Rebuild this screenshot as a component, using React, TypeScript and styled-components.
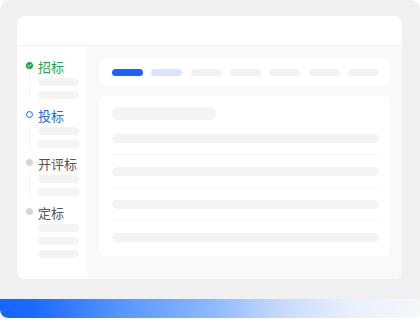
import styled, { createGlobalStyle } from 'styled-components'

const GlobalStyle = createGlobalStyle`
  html, body {
    margin: 0;
    padding: 0;
    background: #ffffff;
  }
  body {
    font-family: 'Noto Sans CJK SC', 'Noto Sans', sans-serif;
  }
`

type StepState = 'done' | 'active' | 'todo'

const steps: { label: string; state: StepState; bars: number }[] = [
  { label: '招标', state: 'done', bars: 2 },
  { label: '投标', state: 'active', bars: 2 },
  { label: '开评标', state: 'todo', bars: 2 },
  { label: '定标', state: 'todo', bars: 3 }
]

const stepColor: Record<StepState, string> = {
  done: '#1ea64c',
  active: '#1a66ff',
  todo: '#555555'
}

const Frame = styled.div`
  width: 420px;
  height: 318px;
  border-radius: 10px 10px 8px 8px;
  background: #f0f0f0;
  overflow: hidden;
  display: flex;
  flex-direction: column;
`

const Stage = styled.div`
  flex: 1;
  padding: 16px 18px 20px 17px;
  display: flex;
`

const Footer = styled.div`
  height: 19px;
  border-radius: 0 0 8px 8px;
  background: linear-gradient(90deg, #1566ff 0%, #1a6bff 8%, #5b97ff 30%, #8cb8ff 50%, #c9dcff 68%, #e9f0fd 84%, #f6f7f9 100%);
`

const Card = styled.div`
  flex: 1;
  background: #ffffff;
  border-radius: 8px;
  overflow: hidden;
  display: flex;
  flex-direction: column;
`

const Header = styled.div`
  height: 29px;
  border-bottom: 1px solid #f1f1f1;
`

const Body = styled.div`
  flex: 1;
  display: flex;
`

const Sidebar = styled.div`
  width: 70px;
  padding: 13px 0 0 8px;
  box-sizing: border-box;
  background: #ffffff;
`

const Step = styled.div<{ $last?: boolean }>`
  display: flex;
  gap: 5px;
  padding-bottom: ${(p) => (p.$last ? '0' : '8.5px')};
`

const Rail = styled.div`
  width: 8px;
  display: flex;
  flex-direction: column;
  align-items: center;
`

const Dot = styled.div<{ $state: StepState }>`
  width: 7px;
  height: 7px;
  margin-top: 3px;
  border-radius: 50%;
  box-sizing: border-box;
  display: flex;
  align-items: center;
  justify-content: center;
  background: ${(p) => (p.$state === 'done' ? '#1ea64c' : p.$state === 'active' ? '#ffffff' : '#d6d6d6')};
  border: ${(p) => (p.$state === 'active' ? '1.5px solid #1a66ff' : 'none')};
`

const Connector = styled.div`
  flex: 1;
  width: 1px;
  margin-top: 4px;
  margin-bottom: -2px;
  background: repeating-linear-gradient(180deg, #e2e2e2 0 1px, transparent 1px 3px);
`

const StepMain = styled.div`
  display: flex;
  flex-direction: column;
`

const StepLabel = styled.div<{ $state: StepState }>`
  height: 16px;
  line-height: 16px;
  font-size: 13px;
  color: ${(p) => stepColor[p.$state]};
  margin-bottom: 3px;
  white-space: nowrap;
`

const SideBar = styled.div`
  width: 41px;
  height: 8px;
  border-radius: 4px;
  background: #f4f4f4;
  & + & {
    margin-top: 5px;
  }
`

const Content = styled.div`
  flex: 1;
  background: #f9f9f9;
  padding: 13px 12px 0 12px;
  display: flex;
  flex-direction: column;
`

const TabCard = styled.div`
  height: 26px;
  background: #ffffff;
  border-radius: 6px;
  padding: 0 11px 0 13px;
  display: flex;
  align-items: center;
  justify-content: space-between;
`

const Pill = styled.div<{ $tone: 'primary' | 'soft' | 'plain' }>`
  width: 31px;
  height: 7px;
  border-radius: 4px;
  background: ${(p) => (p.$tone === 'primary' ? '#1763ff' : p.$tone === 'soft' ? '#d9e5ff' : '#f2f2f2')};
`

const MainCard = styled.div`
  margin-top: 11px;
  height: 160px;
  background: #ffffff;
  border-radius: 7px;
  padding: 11px 11px 0 13px;
  box-sizing: border-box;
  display: flex;
  flex-direction: column;
`

const TitleBar = styled.div`
  width: 104px;
  height: 13px;
  border-radius: 7px;
  background: #f4f4f4;
  margin-bottom: 14px;
`

const Row = styled.div`
  height: 9px;
  border-radius: 5px;
  background: #f4f4f4;
`

const Divider = styled.div`
  height: 1px;
  margin: 11px 1px 12px 0;
  background: #f3f3f3;
`

const Check = () => (
  <svg width='5' height='5' viewBox='0 0 10 10'>
    <path d='M2 5.2 L4.2 7.3 L8 3' fill='none' stroke='#ffffff' strokeWidth='1.8' strokeLinecap='round' strokeLinejoin='round' />
  </svg>
)

const App = () => {
  const tones: ('primary' | 'soft' | 'plain')[] = ['primary', 'soft', 'plain', 'plain', 'plain', 'plain', 'plain']

  return (
    <>
      <GlobalStyle />
      <Frame>
        <Stage>
          <Card>
            <Header />
            <Body>
              <Sidebar>
                {steps.map((step, i) => {
                  const last = i === steps.length - 1
                  return (
                    <Step key={step.label} $last={last}>
                      <Rail>
                        <Dot $state={step.state}>{step.state === 'done' && <Check />}</Dot>
                        {!last && <Connector />}
                      </Rail>
                      <StepMain>
                        <StepLabel $state={step.state}>{step.label}</StepLabel>
                        {Array.from({ length: step.bars }).map((_, j) => (
                          <SideBar key={j} />
                        ))}
                      </StepMain>
                    </Step>
                  )
                })}
              </Sidebar>
              <Content>
                <TabCard>
                  {tones.map((tone, i) => (
                    <Pill key={i} $tone={tone} />
                  ))}
                </TabCard>
                <MainCard>
                  <TitleBar />
                  <Row />
                  <Divider />
                  <Row />
                  <Divider />
                  <Row />
                  <Divider />
                  <Row />
                </MainCard>
              </Content>
            </Body>
          </Card>
        </Stage>
        <Footer />
      </Frame>
    </>
  )
}

export default App
